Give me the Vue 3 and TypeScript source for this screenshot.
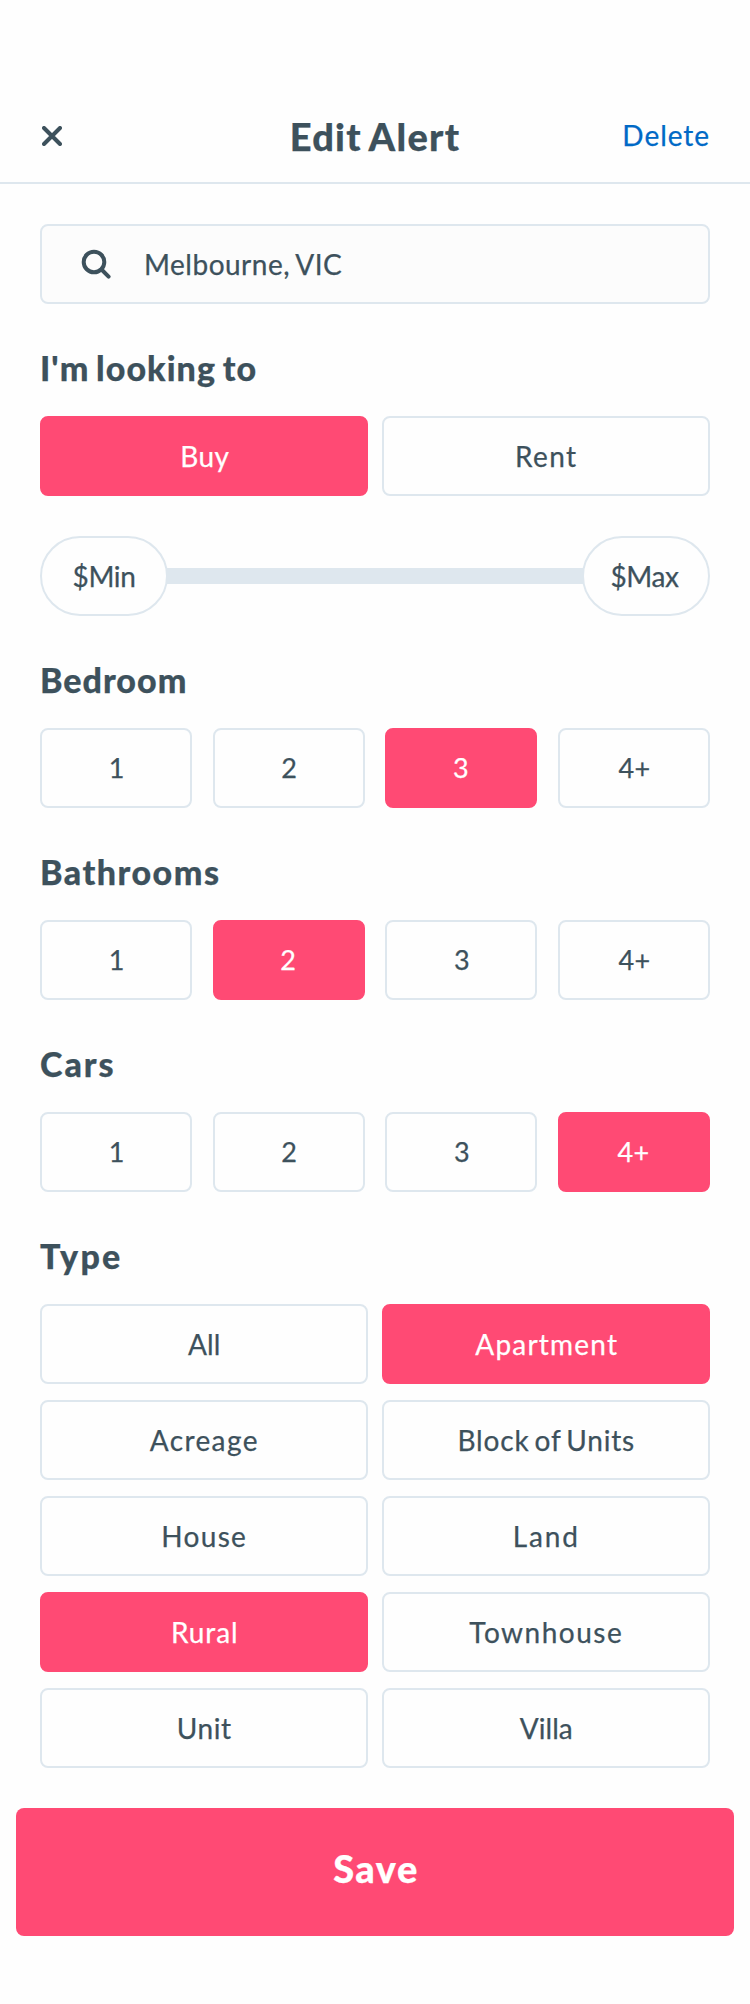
<script setup lang="ts">
import { reactive, ref } from 'vue'

interface Choice {
  label: string
  tracking: number
}

interface CountGroup {
  title: string
  tracking: number
  selected: string
}

const purposes: Choice[] = [
  { label: 'Buy', tracking: 0.3 },
  { label: 'Rent', tracking: 1.4 },
]

const counts: Choice[] = [
  { label: '1', tracking: 0 },
  { label: '2', tracking: 0 },
  { label: '3', tracking: 0 },
  { label: '4+', tracking: 0.4 },
]

const types: Choice[] = [
  { label: 'All', tracking: 0.1 },
  { label: 'Apartment', tracking: 1.2 },
  { label: 'Acreage', tracking: 1.4 },
  { label: 'Block of Units', tracking: 0.85 },
  { label: 'House', tracking: 1.3 },
  { label: 'Land', tracking: 1.8 },
  { label: 'Rural', tracking: 0.9 },
  { label: 'Townhouse', tracking: 1.5 },
  { label: 'Unit', tracking: 0.6 },
  { label: 'Villa', tracking: 0 },
]

const purpose = ref('Buy')
const location = 'Melbourne, VIC'
const groups = reactive<CountGroup[]>([
  { title: 'Bedroom', tracking: 1, selected: '3' },
  { title: 'Bathrooms', tracking: 1.5, selected: '2' },
  { title: 'Cars', tracking: 2, selected: '4+' },
])
const selectedTypes = reactive(new Set<string>(['Apartment', 'Rural']))

function toggleType(label: string) {
  if (!selectedTypes.delete(label)) selectedTypes.add(label)
}

const track = (value: number) => ({ letterSpacing: `${value}px` })
</script>

<template>
  <div class="screen">
    <header class="header">
      <button class="close" aria-label="Close">
        <svg width="20" height="20" viewBox="0 0 20 20">
          <path d="M2 2 18 18M18 2 2 18" />
        </svg>
      </button>
      <h1 class="title">Edit Alert</h1>
      <button class="delete">Delete</button>
    </header>

    <main class="form">
      <div class="search">
        <svg width="30" height="30" viewBox="0 0 30 30">
          <circle cx="13" cy="13" r="10.3" />
          <path d="M20.5 20.5 27.6 27.6" />
        </svg>
        <span>{{ location }}</span>
      </div>

      <h2 class="heading looking">I'm looking to</h2>
      <div class="pair">
        <button
          v-for="item in purposes"
          :key="item.label"
          class="option"
          :class="{ selected: purpose === item.label }"
          :style="track(item.tracking)"
          @click="purpose = item.label"
        >{{ item.label }}</button>
      </div>

      <div class="slider">
        <button class="handle">$Min</button>
        <div class="rail"></div>
        <button class="handle max">$Max</button>
      </div>

      <section v-for="group in groups" :key="group.title">
        <h2 class="heading" :style="track(group.tracking)">{{ group.title }}</h2>
        <div class="quad">
          <button
            v-for="item in counts"
            :key="item.label"
            class="option count"
            :class="{ selected: group.selected === item.label }"
            :style="track(item.tracking)"
            @click="group.selected = item.label"
          >{{ item.label }}</button>
        </div>
      </section>

      <section>
        <h2 class="heading type">Type</h2>
        <div class="pair">
          <button
            v-for="item in types"
            :key="item.label"
            class="option"
            :class="{ selected: selectedTypes.has(item.label) }"
            :style="track(item.tracking)"
            @click="toggleType(item.label)"
          >{{ item.label }}</button>
        </div>
      </section>
    </main>

    <footer class="footer">
      <button class="save">Save</button>
    </footer>
  </div>
</template>

<style>
body {
  margin: 0;
  background: #fefefe;
}
</style>

<style scoped>
.screen {
  box-sizing: border-box;
  width: 750px;
  height: 2004px;
  overflow: hidden;
  background: #fefefe;
  color: #3d515c;
  font-family: Lato, 'Open Sans', sans-serif;
  font-size: 28px;
  -webkit-text-stroke: 0.25px currentColor;
}

button {
  box-sizing: border-box;
  display: block;
  margin: 0;
  padding: 0;
  border: 0;
  background: none;
  color: inherit;
  font: inherit;
  cursor: pointer;
}

svg {
  display: block;
  fill: none;
  stroke: #3d515c;
  stroke-linecap: round;
}

.header {
  box-sizing: border-box;
  display: grid;
  grid-template-columns: 200px 1fr 200px;
  align-items: center;
  height: 184px;
  padding: 90px 40px 0;
  border-bottom: 2px solid #dee7ee;
}

.close {
  justify-self: start;
  padding: 0 2px;
}

.close svg {
  stroke-width: 4;
}

.title {
  margin: 0;
  font-size: 38px;
  line-height: 48px;
  font-weight: 900;
  letter-spacing: 1.3px;
  word-spacing: -2.5px;
  text-align: center;
}

.delete {
  justify-self: end;
  padding-bottom: 2px;
  color: #0069c6;
  letter-spacing: 0.95px;
}

.form {
  padding: 40px 40px 0;
}

.search {
  box-sizing: border-box;
  display: flex;
  align-items: center;
  gap: 33px;
  height: 80px;
  padding: 0 39px;
  border: 2px solid #dee7ee;
  border-radius: 8px;
  background: #fcfcfc;
  line-height: 76px;
  letter-spacing: 0.5px;
  word-spacing: -1.5px;
}

.search svg {
  stroke-width: 4;
}

.heading {
  margin: 44px 0 28px;
  font-size: 34px;
  line-height: 40px;
  font-weight: 900;
}

.looking {
  letter-spacing: 1.05px;
  word-spacing: -2.5px;
}

.type {
  letter-spacing: 2.3px;
}

.pair {
  display: grid;
  grid-template-columns: 328px 328px;
  gap: 16px 14px;
}

.quad {
  display: flex;
  justify-content: space-between;
}

.option {
  height: 80px;
  padding-left: 0.5px;
  border: 2px solid #dee7ee;
  border-radius: 8px;
  line-height: 76px;
  word-spacing: -3px;
  text-align: center;
}

.count {
  width: 152px;
  padding-left: 1px;
  font-size: 27px;
}

.option.selected {
  padding-left: 1.5px;
  border-color: #ff4a74;
  background: #ff4a74;
  color: #fff;
}

.count.selected {
  padding: 0 1px 0 0;
}

.slider {
  display: flex;
  align-items: center;
  margin-top: 40px;
}

.handle {
  width: 128px;
  height: 80px;
  border: 2px solid #dee7ee;
  border-radius: 40px;
  line-height: 76px;
  letter-spacing: -0.4px;
}

.handle.max {
  padding-right: 3px;
}

.rail {
  flex: 1;
  height: 16px;
  margin: 0 -1px;
  background: #dee7ee;
}

.footer {
  padding: 40px 16px 0;
}

.save {
  width: 100%;
  height: 128px;
  padding: 0 0 8px 2px;
  border-radius: 8px;
  background: #ff4a74;
  color: #fff;
  font-size: 38px;
  font-weight: 900;
  line-height: 120px;
  letter-spacing: 1.5px;
}
</style>
